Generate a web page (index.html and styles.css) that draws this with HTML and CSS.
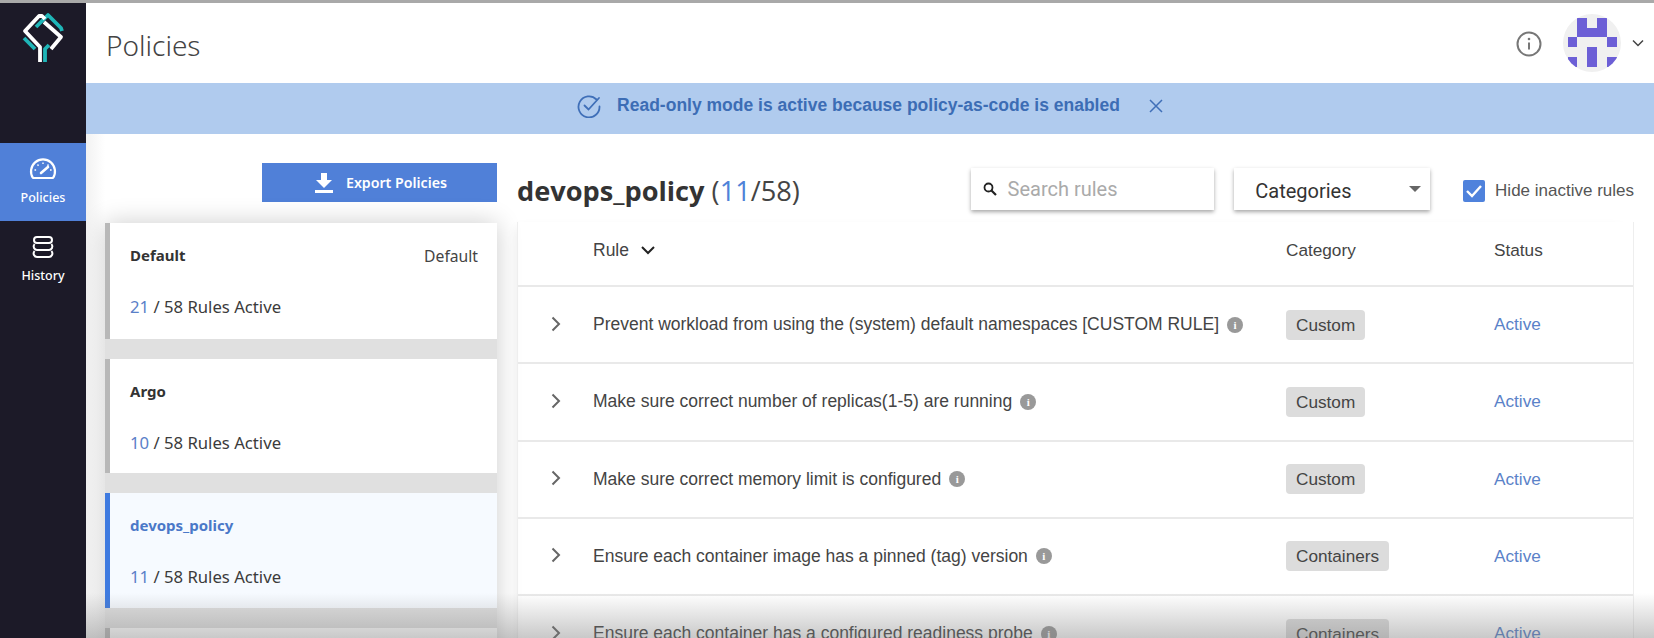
FILE: index.html
```html
<!DOCTYPE html>
<html lang="en">
<head>
<meta charset="utf-8">
<title>Policies</title>
<link rel="stylesheet" href="styles.css">
</head>
<body>
<div class="app">
  <nav class="sidebar">
    <div class="logo">
      <svg width="60" height="65" viewBox="0 0 60 65" fill="none" stroke-width="3.800" stroke-linejoin="round">
        <path d="M21 22L33 10L46 23L47 26" stroke="#1fb6b8"/>
        <path d="M9 33L20 44" stroke="#1fb6b8"/>
        <path d="M30 57V44L34 40" stroke="#1fb6b8"/>
        <path d="M25 57V42L10 26L24 11H27L30 14" stroke="#fff"/>
        <path d="M29 17L46 32L36 44" stroke="#fff"/>
      </svg>
    </div>
    <a class="nav-item nav-active">
      <svg width="28" height="24" viewBox="0 0 28 24" fill="none" stroke="#fff" stroke-width="2.200">
        <path d="M4 21a12 12 0 1 1 20 0Z" stroke-linejoin="round"/>
        <path d="M12 16L19 10" stroke-width="2.600" stroke-linecap="round"/>
        <path d="M14 5.500v1.600M8.500 7.500l1 1.200M19.500 7.500l-1 1.200M5.500 13h1.600M21 13h1.600" stroke-width="1.400"/>
      </svg>
      <span>Policies</span>
    </a>
    <a class="nav-item">
      <svg width="24" height="24" viewBox="0 0 24 24" fill="none" stroke="#fff" stroke-width="2">
        <rect x="3" y="2" width="18" height="6" rx="3"/>
        <path d="M3.500 9Q2 11 3 13Q4 15 6 15H18Q20 15 21 13Q22 11 20.500 9"/>
        <path d="M3.500 16Q2 18 3 20Q4 22 6 22H18Q20 22 21 20Q22 18 20.500 16"/>
      </svg>
      <span>History</span>
    </a>
  </nav>
  <div class="main">
    <header class="topbar">
      <h1 class="page-title">Policies</h1>
      <div class="top-actions">
        <svg class="info-icon" width="26" height="26" viewBox="0 0 26 26" fill="none" stroke="#777" stroke-width="2">
          <circle cx="13" cy="13" r="11.500"/>
          <path d="M13 11.500v7"/>
          <circle cx="13" cy="8" r="1.300" fill="#777" stroke="none"/>
        </svg>
        <svg class="avatar" width="58" height="58" viewBox="0 0 58 58">
          <clipPath id="avatar-clip"><circle cx="29" cy="29" r="29"/></clipPath>
          <g clip-path="url(#avatar-clip)">
            <rect width="58" height="58" fill="#f0f0f0"/>
            <path d="M14 4H24V14H34V4H44V23H14Z M5 23H14V33H5Z M44 23H54V33H44Z M24 33H34V53H24Z M5 43H14V53H5Z M44 43H54V53H44Z" fill="#6c5fd6"/>
          </g>
        </svg>
        <svg class="caret" width="12" height="8" viewBox="0 0 12 8" fill="none" stroke="#444" stroke-width="1.500"><path d="M1 1.500L6 6.500L11 1.500"/></svg>
      </div>
    </header>
    <div class="banner">
      <svg width="24" height="24" viewBox="0 0 24 24" fill="none" stroke="#3f6fb8" stroke-width="1.800" stroke-linecap="round">
        <path d="M19.500 5.500A10.500 10.500 0 1 0 22.500 12.500"/>
        <path d="M7.500 11.500L11.500 15.500L22 4"/>
      </svg>
      <strong class="banner-text">Read-only mode is active because policy-as-code is enabled</strong>
      <svg class="banner-close" width="14" height="14" viewBox="0 0 14 14" fill="none" stroke="#3f6fb8" stroke-width="1.500"><path d="M1 1L13 13M13 1L1 13"/></svg>
    </div>
    <div class="content">
      <aside class="policy-col">
        <button class="export-btn">
          <svg width="20" height="22" viewBox="0 0 20 22" fill="#fff"><path d="M7 1H13V8H18L10 16L2 8H7Z"/><rect x="1" y="18" width="18" height="3"/></svg>
          <span>Export Policies</span>
        </button>
        <div class="policy-list">
          <div class="policy-card">
            <div class="card-top"><b>Default</b><span class="tag">Default</span></div>
            <div class="card-count"><em>21</em> / 58 Rules Active</div>
          </div>
          <div class="policy-card">
            <div class="card-top"><b>Argo</b></div>
            <div class="card-count"><em>10</em> / 58 Rules Active</div>
          </div>
          <div class="policy-card card-active">
            <div class="card-top"><b>devops_policy</b></div>
            <div class="card-count"><em>11</em> / 58 Rules Active</div>
          </div>
          <div class="policy-card"></div>
        </div>
      </aside>
      <section class="rules-col">
        <div class="rules-head">
          <h2 class="rules-title">devops_policy <span>(<em>11</em>/58)</span></h2>
          <div class="search">
            <svg width="14" height="14" viewBox="0 0 14 14" fill="none" stroke="#222" stroke-width="1.800"><circle cx="5.500" cy="5.500" r="4"/><path d="M8.500 8.500L13 13" stroke-width="2.200"/></svg>
            <span>Search rules</span>
          </div>
          <div class="select"><span>Categories</span><i class="select-arrow"></i></div>
          <label class="check">
            <svg width="22" height="22" viewBox="0 0 22 22"><rect width="22" height="22" rx="2" fill="#4f82dc"/><path d="M4 11L9 16L18 6" fill="none" stroke="#fff" stroke-width="2.400"/></svg>
            <span>Hide inactive rules</span>
          </label>
        </div>
        <div class="table">
          <div class="row row-head">
            <div class="c-chev"></div>
            <div class="c-rule">Rule <svg class="sort" width="14" height="9" viewBox="0 0 14 9" fill="none" stroke="#222" stroke-width="2"><path d="M1 1L7 7L13 1"/></svg></div>
            <div class="c-cat">Category</div>
            <div class="c-status">Status</div>
          </div>
          <div class="row">
            <div class="c-chev"><svg width="10" height="16" viewBox="0 0 10 16" fill="none" stroke="#666" stroke-width="2"><path d="M1.500 1.500L8 8L1.500 14.500"/></svg></div>
            <div class="c-rule">Prevent workload from using the (system) default namespaces [CUSTOM RULE] <i class="i-dot">i</i></div>
            <div class="c-cat"><span class="pill">Custom</span></div>
            <div class="c-status">Active</div>
          </div>
          <div class="row">
            <div class="c-chev"><svg width="10" height="16" viewBox="0 0 10 16" fill="none" stroke="#666" stroke-width="2"><path d="M1.500 1.500L8 8L1.500 14.500"/></svg></div>
            <div class="c-rule">Make sure correct number of replicas(1-5) are running <i class="i-dot">i</i></div>
            <div class="c-cat"><span class="pill">Custom</span></div>
            <div class="c-status">Active</div>
          </div>
          <div class="row">
            <div class="c-chev"><svg width="10" height="16" viewBox="0 0 10 16" fill="none" stroke="#666" stroke-width="2"><path d="M1.500 1.500L8 8L1.500 14.500"/></svg></div>
            <div class="c-rule">Make sure correct memory limit is configured <i class="i-dot">i</i></div>
            <div class="c-cat"><span class="pill">Custom</span></div>
            <div class="c-status">Active</div>
          </div>
          <div class="row">
            <div class="c-chev"><svg width="10" height="16" viewBox="0 0 10 16" fill="none" stroke="#666" stroke-width="2"><path d="M1.500 1.500L8 8L1.500 14.500"/></svg></div>
            <div class="c-rule">Ensure each container image has a pinned (tag) version <i class="i-dot">i</i></div>
            <div class="c-cat"><span class="pill">Containers</span></div>
            <div class="c-status">Active</div>
          </div>
          <div class="row">
            <div class="c-chev"><svg width="10" height="16" viewBox="0 0 10 16" fill="none" stroke="#666" stroke-width="2"><path d="M1.500 1.500L8 8L1.500 14.500"/></svg></div>
            <div class="c-rule">Ensure each container has a configured readiness probe <i class="i-dot">i</i></div>
            <div class="c-cat"><span class="pill">Containers</span></div>
            <div class="c-status">Active</div>
          </div>
        </div>
      </section>
      <div class="bottom-fade"></div>
    </div>
  </div>
</div>
</body>
</html>
```

FILE: styles.css
```css
* { box-sizing: border-box; }
html, body { margin: 0; height: 100%; overflow: hidden; background: #fff; }
body { font-family: "Liberation Sans", Arial, sans-serif; color: #333; }
.app { display: flex; height: 638px; border-top: 3px solid #a9a9a9; }

.sidebar { width: 86px; flex: none; background: #1c1a28; display: flex; flex-direction: column; }
.logo { height: 140px; padding: 2px 0 0 15px; }
.nav-item { height: 78px; display: flex; flex-direction: column; align-items: center; justify-content: center; gap: 8px; padding-bottom: 2px; color: #fff; font: 500 12.500px "Noto Sans", sans-serif; }
.nav-active { background: #5080d8; }

.main { flex: 1; min-width: 0; display: flex; flex-direction: column; }
.topbar { height: 80px; flex: none; display: flex; align-items: center; justify-content: space-between; padding: 0 10px 0 20px; }
.page-title { margin: 4px 0 0; font: 300 28px "Noto Sans", sans-serif; color: #444; }
.top-actions { display: flex; align-items: center; }
.info-icon { margin: 2px 21px 0 0; }
.avatar { margin-right: 11px; }
.banner { height: 51px; flex: none; background: #b0cbee; display: flex; align-items: center; justify-content: center; gap: 16px; padding-bottom: 6px; }
.banner-text { font-size: 17.500px; color: #3c6db5; }
.banner-close { margin-left: 13px; }

.content { position: relative; flex: 1; min-height: 0; display: flex; overflow: hidden; }
.policy-col { width: 431px; flex: none; padding: 29px 0 0 19px; background: linear-gradient(to right, #f2f2f2, #fff 19px); }
.export-btn { display: flex; align-items: center; justify-content: center; gap: 12px; width: 235px; height: 39px; margin: 0 0 20.500px 157px; background: #5080d8; border: 0; color: #fff; font: 600 14.200px "Noto Sans", sans-serif; padding: 0 0 0 2px; }
.policy-list { display: flex; flex-direction: column; width: 392px; background: #e0e0e0; gap: 20px; box-shadow: 0 0 24px rgba(0,0,0,.2); }
.policy-card { height: 114.500px; flex: none; background: #fff; border-left: 5px solid #b8b8b8; padding: 22px 19px 0 20px; font-family: "Noto Sans", sans-serif; font-size: 15px; }
.policy-card:first-child { height: 116px; }
.card-top { display: flex; justify-content: space-between; height: 50px; }
.card-top b { font-weight: 700; color: #333; }
.tag { color: #444; font-size: 15.700px; }
.card-count { color: #3b3b3b; font-size: 16.700px; }
.card-count em { font-style: normal; color: #5a80c8; }
.card-active { background: #f6faff; border-left-color: #3f7be0; }
.card-active b { color: #4a78c8; }

.rules-col { flex: 1; min-width: 0; padding-right: 20px; display: flex; flex-direction: column; }
.rules-head { height: 88px; display: flex; align-items: flex-start; padding-top: 38px; flex: none; }
.rules-title { margin: 0; width: 454px; font: 700 27.200px "Open Sans", sans-serif; color: #333; white-space: nowrap; }
.rules-title span { font-weight: 400; color: #444; }
.rules-title em { font-style: normal; color: #4f82d8; }
.search { width: 244px; height: 42px; margin-top: -4px; display: flex; align-items: center; gap: 11px; padding-left: 12px; background: #fff; box-shadow: 0 2px 4px rgba(0,0,0,.35); color: #aaa; font: 20px Roboto, sans-serif; }
.select { width: 196px; height: 42px; margin: -4px 0 0 20px; display: flex; align-items: center; justify-content: space-between; padding: 3px 9px 0 21px; background: #fff; box-shadow: 0 2px 4px rgba(0,0,0,.35); font: 20px Roboto, sans-serif; color: #333; }
.select-arrow { width: 0; height: 0; border: 6px solid transparent; border-top-color: #666; border-bottom: 0; margin-top: -3px; }
.check { display: flex; align-items: center; gap: 10px; margin: 7px 0 0 33px; height: 24px; font: 17px "Liberation Sans", sans-serif; color: #555; white-space: nowrap; }

.table { border-left: 1px solid #eee; border-right: 1px solid #eee; box-shadow: -6px 0 10px -6px rgba(0,0,0,.08); }
.row { height: 77.250px; display: flex; align-items: center; border-bottom: 2px solid #e9e9e9; font-size: 17.200px; color: #444; }
.row-head { height: 65px; padding-bottom: 6px; }
.c-chev { width: 75px; flex: none; padding: 0 0 2px 33px; display: flex; }
.c-rule { width: 693px; flex: none; display: flex; align-items: center; gap: 8px; white-space: nowrap; font-size: 17.500px; }
.c-cat { width: 208px; flex: none; }
.c-status { color: #5a82c8; }
.row-head .c-status { color: #444; }
.sort { margin-left: 4px; }
.pill { display: inline-block; height: 30px; line-height: 30px; padding: 0 10px; background: #dcdcdc; border-radius: 4px; color: #444; }
.i-dot { width: 16px; height: 16px; border-radius: 50%; background: #999; color: #fff; font: 700 11px/16px "Liberation Serif", serif; text-align: center; }
.bottom-fade { position: absolute; left: 0; right: 0; bottom: 0; height: 45px; background: linear-gradient(to bottom, rgba(120,120,120,0), rgba(120,120,120,.4)); pointer-events: none; }
```
